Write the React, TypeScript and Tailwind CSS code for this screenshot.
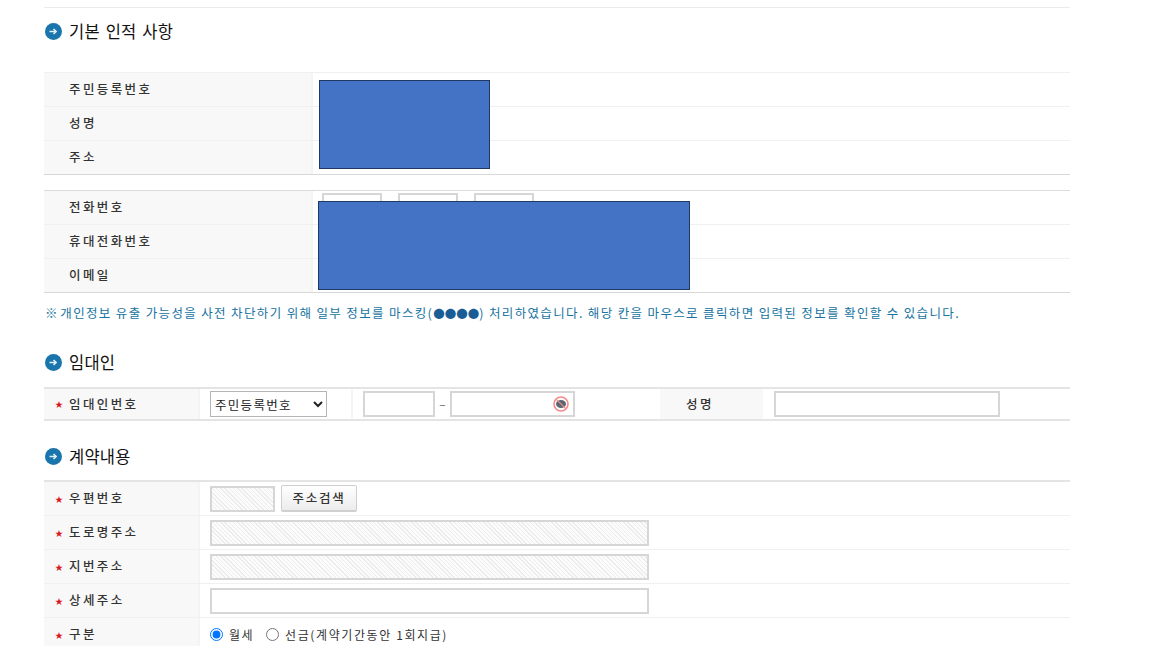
import React from "react";

const font = "font-['Noto_Sans_CJK_KR','Noto_Sans',sans-serif]";
const hatch =
  "bg-[repeating-linear-gradient(45deg,#ececec_0,#ececec_1px,#fcfcfc_1px,#fcfcfc_3px)]";

const Heading = ({ title }: { title: string }) => (
  <div className="ml-px flex h-[24px] items-center gap-[7px]">
    <svg width="17" height="17" viewBox="0 0 17 17">
      <circle cx="8.5" cy="8.5" r="8.5" fill="#1b75ad" />
      <path d="M4.5 8.5h6.5M8.5 6l2.6 2.5-2.6 2.5" fill="none" stroke="#dfeef7" strokeWidth="1.6" />
    </svg>
    <h2 className="text-[16.5px] font-normal tracking-[0.2px] [word-spacing:2px] text-[#111]">{title}</h2>
  </div>
);

const Label = ({ text, required, width }: { text: string; required?: boolean; width: string }) => (
  <div
    className={`box-content flex h-full shrink-0 items-center border-r-2 border-[#f4f4f4] bg-[#f8f8f8] text-[12.5px] font-medium tracking-[2.4px] text-[#333] ${width}`}
  >
    <span className="flex w-[25px] shrink-0 justify-end pr-[6px] text-[8px] tracking-normal text-[#d8141d]">
      {required ? "★" : ""}
    </span>
    {text}
  </div>
);

const Row = ({ children, last }: { children: React.ReactNode; last?: boolean }) => (
  <div className={`flex h-[34px] items-center border-b ${last ? "border-[#d8d8d8]" : "border-[#f0f0f0]"}`}>
    {children}
  </div>
);

const TextBox = ({ className }: { className: string }) => (
  <div className={`h-[26px] border-2 border-[#d6d6d6] bg-white ${className}`} />
);

const Hatched = ({ className }: { className: string }) => (
  <div className={`h-[26px] border-2 border-[#d6d6d6] ${hatch} ${className}`} />
);

const EyeOff = () => (
  <svg width="16" height="16" viewBox="0 0 16 16" className="absolute right-[6px] top-1/2 -translate-y-1/2">
    <ellipse cx="8" cy="8" rx="5" ry="4" fill="#5a6672" />
    <circle cx="8" cy="8" r="7" fill="none" stroke="#f58a88" strokeWidth="1.6" />
    <path d="M3.2 3.4l9.6 9.2" stroke="#f58a88" strokeWidth="1.2" />
  </svg>
);

export default function App() {
  return (
    <div className={`h-[669px] overflow-hidden bg-white ${font}`}>
      <div className="ml-[44px] h-[646px] w-[1026px] overflow-hidden pt-[7px]">
        <div className="h-px border-t border-[#e8ecef]" />
        <div className="mt-[11px]">
          <Heading title="기본 인적 사항" />
        </div>

        <div className="relative mt-[29px] border-t border-[#f0f0f0]">
          <Row>
            <Label text="주민등록번호" width="w-[267px]" />
          </Row>
          <Row>
            <Label text="성명" width="w-[267px]" />
          </Row>
          <Row last>
            <Label text="주소" width="w-[267px]" />
          </Row>
          <div className="absolute left-[275px] top-[7px] h-[89px] w-[171px] border border-[#1f3864] bg-[#4472c4]" />
        </div>

        <div className="relative mt-[15px] border-t border-[#dcdcdc]">
          <Row>
            <Label text="전화번호" width="w-[267px]" />
            <div className="mb-[4px] ml-[9px] flex gap-[16px]">
              <TextBox className="w-[60px]" />
              <TextBox className="w-[60px]" />
              <TextBox className="w-[60px]" />
            </div>
          </Row>
          <Row>
            <Label text="휴대전화번호" width="w-[267px]" />
          </Row>
          <Row last>
            <Label text="이메일" width="w-[267px]" />
          </Row>
          <div className="absolute left-[274px] top-[10px] h-[89px] w-[372px] border border-[#1f3864] bg-[#4472c4]" />
        </div>

        <p className="ml-px mt-[10px] h-[20px] text-[12.5px] leading-[20px] tracking-[1.35px] text-[#17739f]">
          <span className="tracking-normal">※ </span>
          개인정보 유출 가능성을 사전 차단하기 위해 일부 정보를 마스킹(
          <span className="text-[11.5px] tracking-normal text-[#1a5d95]">●●●●</span>
          ) 처리하였습니다. 해당 칸을 마우스로 클릭하면 입력된 정보를 확인할 수 있습니다.
        </p>

        <div className="mt-[27px]">
          <Heading title="임대인" />
        </div>

        <div className="mt-[13px] flex h-[34px] items-center border-y-2 border-[#e4e4e4]">
          <Label text="임대인번호" required width="w-[154px]" />
          <div className="flex h-full w-[153px] shrink-0 items-center border-r-2 border-[#f4f4f4] pl-[10px]">
            <select className="h-[26px] w-[117px] border border-[#b5b5b5] bg-white text-[12.5px] tracking-[1.3px] text-[#222]">
              <option>주민등록번호</option>
            </select>
          </div>
          <div className="ml-[10px] flex items-center">
            <TextBox className="w-[72px]" />
            <span className="w-[15px] text-center text-[12px] text-[#666]">–</span>
            <div className="relative">
              <TextBox className="w-[125px]" />
              <EyeOff />
            </div>
          </div>
          <div className="ml-[85px] flex h-full w-[103px] items-center bg-[#f8f8f8] pl-[26px] text-[12.5px] font-medium tracking-[2.4px] text-[#333]">
            성명
          </div>
          <TextBox className="ml-[11px] w-[226px]" />
        </div>

        <div className="mt-[23px]">
          <Heading title="계약내용" />
        </div>

        <div className="mt-[12px] border-t-2 border-[#e4e4e4]">
          <Row>
            <Label text="우편번호" required width="w-[154px]" />
            <Hatched className="ml-[10px] w-[65px]" />
            <button className="ml-[6px] h-[27px] w-[76px] rounded-[2px] border border-b-2 border-[#cfcfcf] bg-gradient-to-b from-white to-[#ececec] text-[12.5px] font-medium tracking-[1.8px] text-[#333]">
              주소검색
            </button>
          </Row>
          <Row>
            <Label text="도로명주소" required width="w-[154px]" />
            <Hatched className="ml-[10px] w-[439px]" />
          </Row>
          <Row>
            <Label text="지번주소" required width="w-[154px]" />
            <Hatched className="ml-[10px] w-[439px]" />
          </Row>
          <Row>
            <Label text="상세주소" required width="w-[154px]" />
            <TextBox className="ml-[10px] w-[439px]" />
          </Row>
          <Row>
            <Label text="구분" required width="w-[154px]" />
            <label className="ml-[10px] flex items-center text-[12px] text-[#333]">
              <input type="radio" name="kind" defaultChecked className="m-0 h-[13px] w-[13px] accent-[#0075ff]" />
              <span className="ml-[6px] tracking-[1.5px]">월세</span>
            </label>
            <label className="ml-[12px] flex items-center text-[12px] text-[#333]">
              <input type="radio" name="kind" className="m-0 h-[13px] w-[13px]" />
              <span className="ml-[6px] tracking-[1.6px]">선금(계약기간동안 1회지급)</span>
            </label>
          </Row>
        </div>
      </div>
    </div>
  );
}
